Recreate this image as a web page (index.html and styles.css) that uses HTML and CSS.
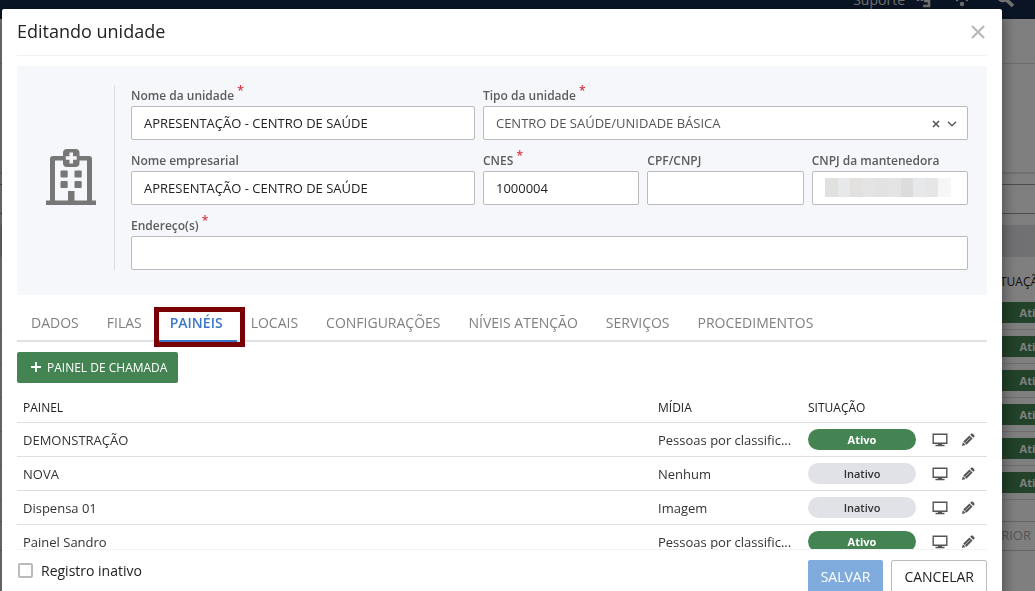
FILE: index.html
```
<!DOCTYPE html>
<html lang="pt-BR">
<head>
<meta charset="utf-8">
<title>Editando unidade</title>
<link rel="stylesheet" href="styles.css">
</head>
<body>
<svg class="sprite" aria-hidden="true">
  <symbol id="monitor" viewBox="0 0 16 14">
    <path d="M1.2 1.2h13.6v9H1.2z" fill="none" stroke="currentColor" stroke-width="1.4"/>
    <path d="M6 10.500h4v1.300h2.500v1.400H3.500v-1.400H6z" fill="currentColor"/>
  </symbol>
  <symbol id="pencil" viewBox="0 0 14 14">
    <path d="M.9 13.100l1-3.800 2.800 2.800zM2.300 8.500l6.100-6.100 3.200 3.200-6.100 6.100zM9.200 1.700l.9-.9c.5-.5 1.200-.5 1.700 0l1.400 1.400c.5.5.5 1.200 0 1.700l-.9.900z" fill="currentColor"/>
    <path d="M4.300 9.700l5-5" stroke="#fff" stroke-width=".6"/>
  </symbol>
</svg>

<div class="page" aria-hidden="true">
  <header class="topbar">
    <span>Suporte</span>
    <svg width="18" height="18" viewBox="0 0 18 18"><path d="M3 7.500v2.500M7 7.500v2.500M14 4v11H8M9 10h5" fill="none" stroke="currentColor" stroke-width="2.600"/></svg>
    <svg class="topbar-dots" width="18" height="18" viewBox="0 0 18 18"><circle cx="9" cy="13" r="2.200" fill="currentColor"/><path d="M3 9.500l2-1M13 8.500l2 1" fill="none" stroke="currentColor" stroke-width="2"/></svg>
    <svg class="topbar-search" width="18" height="18" viewBox="0 0 18 18"><circle cx="6" cy="5" r="5" fill="none" stroke="currentColor" stroke-width="2.600"/><path d="M9.500 9l6.500 6" stroke="currentColor" stroke-width="3.600"/></svg>
  </header>
  <div class="page-title"></div>
  <div class="page-filters"></div>
  <div class="page-search"></div>
  <div class="page-band"></div>
  <div class="page-head"><span>SITUAÇÃO</span></div>
  <div class="page-row"><span>Ativo</span></div>
  <div class="page-row"><span>Ativo</span></div>
  <div class="page-row"><span>Ativo</span></div>
  <div class="page-row"><span>Ativo</span></div>
  <div class="page-row"><span>Ativo</span></div>
  <div class="page-row"><span>Ativo</span></div>
  <div class="page-pager">ANTERIOR</div>
</div>

<div class="overlay">
  <main class="modal" role="dialog" aria-labelledby="modal-title">
    <header class="modal-header">
      <h1 id="modal-title">Editando unidade</h1>
      <button class="close" type="button" aria-label="Fechar">
        <svg width="14" height="14" viewBox="0 0 14 14"><path d="M1 1l12 12M13 1L1 13" stroke="currentColor" stroke-width="2.400"/></svg>
      </button>
    </header>

    <section class="unit">
      <div class="unit-icon">
        <svg width="50" height="57" viewBox="0 0 50 57">
          <path d="M0 51.500h4V10c0-2 1-3 3-3h10V4c0-2.600 1.400-4 4-4h8.500c2.600 0 4 1.400 4 4v3H43c2 0 3 1 3 3v41.500h4V56H0zM9 11.500v40h13V42h6.500v9.500H41v-40h-7.500V14c0 2.600-1.400 4-4 4H21c-2.600 0-4-1.400-4-4v-2.500zM23.500 3.500v3.700h-3.700v3.600h3.700v3.700H27v-3.700h3.700V7.200H27V3.500z" fill="#777" fill-rule="evenodd"/>
          <rect x="14.500" y="21.500" width="7.200" height="7" rx="1" fill="#777"/>
          <rect x="28.500" y="21.500" width="7.200" height="7" rx="1" fill="#777"/>
          <rect x="14.500" y="32" width="7.200" height="7" rx="1" fill="#777"/>
          <rect x="28.500" y="32" width="7.200" height="7" rx="1" fill="#777"/>
        </svg>
      </div>
      <form class="fields">
        <div class="field">
          <label for="nome">Nome da unidade <sup>*</sup></label>
          <input id="nome" type="text" value="APRESENTAÇÃO - CENTRO DE SAÚDE">
        </div>
        <div class="field span-3">
          <label for="tipo">Tipo da unidade <sup>*</sup></label>
          <div class="select">
            <select id="tipo"><option>CENTRO DE SAÚDE/UNIDADE BÁSICA</option></select>
            <div class="select-tools">
              <button type="button" aria-label="Limpar"><svg width="8" height="8" viewBox="0 0 8 8"><path d="M1 1l6 6M7 1L1 7" stroke="currentColor" stroke-width="1.500"/></svg></button>
              <svg width="10" height="6" viewBox="0 0 10 6"><path d="M1 .8l4 4 4-4" fill="none" stroke="currentColor" stroke-width="1.300"/></svg>
            </div>
          </div>
        </div>
        <div class="field">
          <label for="empresa">Nome empresarial</label>
          <input id="empresa" type="text" value="APRESENTAÇÃO - CENTRO DE SAÚDE">
        </div>
        <div class="field">
          <label for="cnes">CNES <sup>*</sup></label>
          <input id="cnes" type="text" value="1000004">
        </div>
        <div class="field">
          <label for="cpf">CPF/CNPJ</label>
          <input id="cpf" type="text">
        </div>
        <div class="field">
          <label for="cnpj">CNPJ da mantenedora</label>
          <input id="cnpj" class="masked" type="text">
        </div>
        <div class="field span-4">
          <label for="endereco">Endereço(s) <sup>*</sup></label>
          <input id="endereco" type="text">
        </div>
      </form>
    </section>

    <nav class="tabs">
      <a href="#dados">DADOS</a>
      <a href="#filas">FILAS</a>
      <a href="#paineis" class="active">PAINÉIS</a>
      <a href="#locais">LOCAIS</a>
      <a href="#configuracoes">CONFIGURAÇÕES</a>
      <a href="#niveis">NÍVEIS ATENÇÃO</a>
      <a href="#servicos">SERVIÇOS</a>
      <a href="#procedimentos">PROCEDIMENTOS</a>
    </nav>

    <section class="list">
      <button class="add" type="button">
        <svg width="10" height="10" viewBox="0 0 10 10"><path d="M5 0v10M0 5h10" stroke="currentColor" stroke-width="1.800"/></svg>
        PAINEL DE CHAMADA
      </button>
      <table>
        <colgroup><col><col class="col-media"><col class="col-status"><col class="col-actions"></colgroup>
        <thead>
          <tr><th>PAINEL</th><th>MÍDIA</th><th>SITUAÇÃO</th><th></th></tr>
        </thead>
        <tbody>
          <tr>
            <td>DEMONSTRAÇÃO</td><td>Pessoas por classific...</td><td><span class="badge on">Ativo</span></td>
            <td><div class="actions"><button type="button" aria-label="Exibir"><svg width="16" height="14"><use href="#monitor"/></svg></button><button type="button" aria-label="Editar"><svg width="14" height="14"><use href="#pencil"/></svg></button></div></td>
          </tr>
          <tr>
            <td>NOVA</td><td>Nenhum</td><td><span class="badge">Inativo</span></td>
            <td><div class="actions"><button type="button" aria-label="Exibir"><svg width="16" height="14"><use href="#monitor"/></svg></button><button type="button" aria-label="Editar"><svg width="14" height="14"><use href="#pencil"/></svg></button></div></td>
          </tr>
          <tr>
            <td>Dispensa 01</td><td>Imagem</td><td><span class="badge">Inativo</span></td>
            <td><div class="actions"><button type="button" aria-label="Exibir"><svg width="16" height="14"><use href="#monitor"/></svg></button><button type="button" aria-label="Editar"><svg width="14" height="14"><use href="#pencil"/></svg></button></div></td>
          </tr>
          <tr>
            <td>Painel Sandro</td><td>Pessoas por classific...</td><td><span class="badge on">Ativo</span></td>
            <td><div class="actions"><button type="button" aria-label="Exibir"><svg width="16" height="14"><use href="#monitor"/></svg></button><button type="button" aria-label="Editar"><svg width="14" height="14"><use href="#pencil"/></svg></button></div></td>
          </tr>
        </tbody>
      </table>
    </section>

    <footer class="modal-footer">
      <label class="check"><input type="checkbox"> Registro inativo</label>
      <div class="buttons">
        <button class="save" type="button">SALVAR</button>
        <button class="cancel" type="button">CANCELAR</button>
      </div>
    </footer>
  </main>
</div>
</body>
</html>
```
FILE: styles.css
```
* {
  box-sizing: border-box;
}

body {
  margin: 0;
  height: 100vh;
  overflow: hidden;
  background: #fff;
  color: #222;
  font-family: "Open Sans", sans-serif;
  font-size: 13px;
}

button,
input,
select {
  font: inherit;
}

button {
  border: 0;
  padding: 0;
  background: none;
  color: inherit;
}

svg {
  display: block;
}

.sprite {
  position: absolute;
  width: 0;
  height: 0;
}

/* Page behind the dialog */
.page {
  overflow: hidden;
  height: 100vh;
}

.topbar {
  display: flex;
  justify-content: flex-end;
  align-items: flex-end;
  gap: 10px;
  height: 19px;
  padding: 0 20px 10px 0;
  background: #14294a;
  color: #e4e4e4;
  font-size: 14px;
  line-height: 18px;
}

.topbar-dots {
  margin-left: 10px;
}

.topbar-search {
  margin-left: 16px;
}

.topbar svg {
  flex: none;
}

.page-title {
  height: 45px;
  border-bottom: 1px solid #ddd;
}

.page-filters {
  height: 110px;
  border-bottom: 2px solid #e0e0e0;
}

.page-search {
  height: 30px;
  margin-top: 10px;
  border-top: 1px solid #999;
  border-bottom: 1px solid #999;
}

.page-band {
  height: 32px;
  margin-top: 11px;
  background: #e2e3e8;
}

.page-head,
.page-row {
  display: grid;
  grid-template-columns: 1fr 88px;
  margin-right: -43px;
  align-items: center;
}

.page-head {
  height: 39px;
  padding-top: 9px;
  font-weight: 500;
  font-size: 12px;
}

.page-row {
  height: 34px;
  border-bottom: 1px solid #ddd;
}

.page-row span,
.page-head span {
  grid-column: 2;
}

.page-row span {
  background: #448452;
  color: #fff;
  font-size: 11px;
  font-weight: 700;
  line-height: 21px;
  text-align: center;
}

.page-pager {
  height: 30px;
  margin-top: 21px;
  padding-right: 4px;
  border-top: 1px solid #ccc;
  border-bottom: 1px solid #ccc;
  color: #aaa;
  line-height: 26px;
  text-align: right;
}

/* Dialog */
.overlay {
  position: fixed;
  inset: 0;
  overflow: hidden;
  padding: 9px 33px 0 2px;
  background: rgba(0, 0, 0, 0.5);
}

.modal {
  display: flex;
  flex-direction: column;
  height: calc(100% + 10px);
  padding: 0 15px;
  border-radius: 2px 2px 0 0;
  background: #fff;
  box-shadow: 0 5px 15px rgba(0, 0, 0, 0.5);
}

.modal-header {
  display: flex;
  flex: none;
  justify-content: space-between;
  align-items: flex-start;
  height: 47px;
  padding-top: 10px;
  border-bottom: 1px solid #f2f2f2;
}

.modal-header h1 {
  margin: 0;
  font-size: 18px;
  font-weight: 400;
  line-height: 24px;
}

.close {
  padding: 6px 2px;
  color: #bbb;
}

.unit {
  display: flex;
  flex: none;
  margin-top: 10px;
  padding: 19px 19px 25px 0;
  border-radius: 2px;
  background: #f6f7fb;
}

.unit-icon {
  display: flex;
  flex: none;
  justify-content: flex-end;
  align-items: center;
  width: 98px;
  padding-right: 18px;
  border-right: 1px solid #dcdde1;
}

.fields {
  display: grid;
  flex: 1;
  grid-template-columns: 2.2fr 1fr 1fr 1fr;
  gap: 10px 8px;
  padding-left: 16px;
}

.span-3 {
  grid-column: span 3;
}

.span-4 {
  grid-column: span 4;
}

.field {
  min-width: 0;
}

.field label {
  display: block;
  height: 21px;
  color: #5c5c5c;
  font-size: 12px;
  font-weight: 600;
  line-height: 22px;
}

sup {
  color: #d9333f;
  font-size: 12px;
  line-height: 0;
}

.field input,
.field select {
  display: block;
  width: 100%;
  height: 34px;
  padding: 0 12px;
  border: 1px solid #bbb;
  border-radius: 2px;
  background: #fff;
  color: #222;
}

.field select {
  appearance: none;
  color: #555;
}

.field .masked {
  background: linear-gradient(90deg, #e0e0de 0 13px, #e7e8ea 0 25px, #e3e1df 0 38px, #e4e4e4 0 50px, #e3e2e0 0 63px, #e4e4e4 0 76px, #dcdcdc 0 88px, #e7e8ea 0 101px, #e6e6e6 0 113px, #f5f7f6 0) 12px 6px / 126px 19px no-repeat #fff;
}

.select {
  position: relative;
}

.select-tools {
  position: absolute;
  top: 0;
  right: 11px;
  bottom: 0;
  display: flex;
  align-items: center;
  gap: 7px;
  padding-top: 2px;
  color: #555;
}

/* Tabs */
.tabs {
  display: flex;
  flex: none;
  height: 47px;
  border-bottom: 2px solid #e1e2e6;
}

.tabs a {
  position: relative;
  height: 47px;
  padding: 10px 14px 0;
  color: #808080;
  font-size: 14px;
  line-height: 36px;
  text-decoration: none;
}

.tabs .active {
  border-bottom: 2px solid #3b78c8;
  color: #3b78c8;
  font-weight: 600;
}

.tabs .active::after {
  content: "";
  position: absolute;
  inset: 12px -8px -7px -2px;
  border: 5px solid #7b0004;
}

/* Panel list */
.list {
  flex: 1;
  min-height: 0;
  padding-top: 10px;
  overflow: hidden;
}

.add {
  display: flex;
  align-items: center;
  gap: 6px;
  height: 31px;
  padding: 0 11px 1px 14px;
  border-radius: 2px;
  background: #448452;
  color: #fff;
  font-size: 12px;
  font-weight: 500;
}

table {
  width: 100%;
  border-collapse: separate;
  border-spacing: 0;
  table-layout: fixed;
}

.col-media {
  width: 150px;
}

.col-status {
  width: 120px;
}

.col-actions {
  width: 65px;
}

th,
td {
  height: 34px;
  padding: 0 6px;
  border-bottom: 1px solid #dfdfe1;
  text-align: left;
  white-space: nowrap;
}

th {
  height: 40px;
  padding-top: 10px;
  font-size: 12px;
  font-weight: 500;
}

td {
  color: #333;
}

.badge {
  display: block;
  border-radius: 11px;
  background: #e1e2e7;
  font-size: 11px;
  font-weight: 600;
  line-height: 21px;
  text-align: center;
}

.badge.on {
  background: #448452;
  color: #fff;
  font-weight: 700;
}

.actions {
  display: flex;
  align-items: center;
  gap: 13px;
  padding-left: 4px;
  color: #555;
}

/* Footer */
.modal-footer {
  display: flex;
  flex: none;
  justify-content: space-between;
  align-items: flex-start;
  height: 52px;
  padding-top: 10px;
  border-top: 1px solid #f2f2f2;
}

.check {
  display: flex;
  align-items: center;
  gap: 8px;
  height: 21px;
  padding-left: 1px;
  font-size: 14px;
}

.check input {
  appearance: none;
  width: 15px;
  height: 15px;
  margin: 0;
  border: 2px solid #bbb;
  border-radius: 2px;
  background: #fff;
}

.buttons {
  display: flex;
  gap: 8px;
}

.buttons button {
  height: 33px;
  padding: 0 13px;
  border-radius: 2px;
  font-size: 14px;
}

.buttons .save {
  background: #80abdd;
  color: #fff;
}

.buttons .cancel {
  padding: 0 12px;
  border: 1px solid #bbb;
}
```
